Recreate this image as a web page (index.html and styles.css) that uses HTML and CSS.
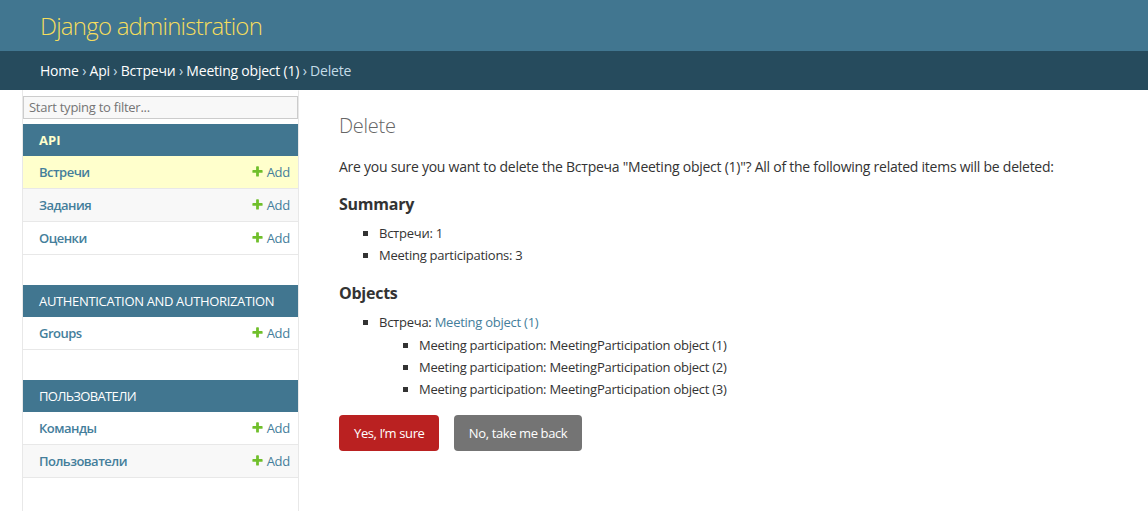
FILE: index.html
```html
<!DOCTYPE html>
<html lang="en">
<head>
<meta charset="utf-8">
<title>Delete | Django site admin</title>
<link rel="stylesheet" href="styles.css">
</head>
<body>
<div class="container">
  <header class="header">
    <h1 class="branding"><a href="#">Django administration</a></h1>
  </header>
  <nav class="breadcrumbs">
    <a href="#">Home</a> › <a href="#">Api</a> › <a href="#">Встречи</a> › <a href="#">Meeting object (1)</a> › Delete
  </nav>
  <div class="main">
    <button class="toggle-nav" aria-label="Toggle navigation"></button>
    <aside class="sidebar">
      <input class="nav-filter" type="search" placeholder="Start typing to filter...">
      <table class="module current-app">
        <caption><a class="section current" href="#">API</a></caption>
        <tr class="current-model"><th><a href="#">Встречи</a></th><td><a class="addlink" href="#"><svg class="plus" viewBox="0 0 1792 1792" width="13" height="13"><path fill="#70bf2b" d="M1600 796v192q0 40-28 68t-68 28h-416v416q0 40-28 68t-68 28h-192q-40 0-68-28t-28-68v-416h-416q-40 0-68-28t-28-68v-192q0-40 28-68t68-28h416v-416q0-40 28-68t68-28h192q40 0 68 28t28 68v416h416q40 0 68 28t28 68z"/></svg>Add</a></td></tr>
        <tr><th><a href="#">Задания</a></th><td><a class="addlink" href="#"><svg class="plus" viewBox="0 0 1792 1792" width="13" height="13"><path fill="#70bf2b" d="M1600 796v192q0 40-28 68t-68 28h-416v416q0 40-28 68t-68 28h-192q-40 0-68-28t-28-68v-416h-416q-40 0-68-28t-28-68v-192q0-40 28-68t68-28h416v-416q0-40 28-68t68-28h192q40 0 68 28t28 68v416h416q40 0 68 28t28 68z"/></svg>Add</a></td></tr>
        <tr><th><a href="#">Оценки</a></th><td><a class="addlink" href="#"><svg class="plus" viewBox="0 0 1792 1792" width="13" height="13"><path fill="#70bf2b" d="M1600 796v192q0 40-28 68t-68 28h-416v416q0 40-28 68t-68 28h-192q-40 0-68-28t-28-68v-416h-416q-40 0-68-28t-28-68v-192q0-40 28-68t68-28h416v-416q0-40 28-68t68-28h192q40 0 68 28t28 68v416h416q40 0 68 28t28 68z"/></svg>Add</a></td></tr>
      </table>
      <table class="module">
        <caption><a class="section latin" href="#">Authentication and Authorization</a></caption>
        <tr><th><a href="#">Groups</a></th><td><a class="addlink" href="#"><svg class="plus" viewBox="0 0 1792 1792" width="13" height="13"><path fill="#70bf2b" d="M1600 796v192q0 40-28 68t-68 28h-416v416q0 40-28 68t-68 28h-192q-40 0-68-28t-28-68v-416h-416q-40 0-68-28t-28-68v-192q0-40 28-68t68-28h416v-416q0-40 28-68t68-28h192q40 0 68 28t28 68v416h416q40 0 68 28t28 68z"/></svg>Add</a></td></tr>
      </table>
      <table class="module">
        <caption><a class="section cyr" href="#">Пользователи</a></caption>
        <tr><th><a href="#">Команды</a></th><td><a class="addlink" href="#"><svg class="plus" viewBox="0 0 1792 1792" width="13" height="13"><path fill="#70bf2b" d="M1600 796v192q0 40-28 68t-68 28h-416v416q0 40-28 68t-68 28h-192q-40 0-68-28t-28-68v-416h-416q-40 0-68-28t-28-68v-192q0-40 28-68t68-28h416v-416q0-40 28-68t68-28h192q40 0 68 28t28 68v416h416q40 0 68 28t28 68z"/></svg>Add</a></td></tr>
        <tr><th><a href="#">Пользователи</a></th><td><a class="addlink" href="#"><svg class="plus" viewBox="0 0 1792 1792" width="13" height="13"><path fill="#70bf2b" d="M1600 796v192q0 40-28 68t-68 28h-416v416q0 40-28 68t-68 28h-192q-40 0-68-28t-28-68v-416h-416q-40 0-68-28t-28-68v-192q0-40 28-68t68-28h416v-416q0-40 28-68t68-28h192q40 0 68 28t28 68v416h416q40 0 68 28t28 68z"/></svg>Add</a></td></tr>
      </table>
    </aside>
    <main class="content">
      <h1 class="title">Delete</h1>
      <p class="intro">Are you sure you want to delete the Встреча "Meeting object (1)"? All of the following related items will be deleted:</p>
      <h2 class="subhead">Summary</h2>
      <ul class="list">
        <li>Встречи: 1</li>
        <li>Meeting participations: 3</li>
      </ul>
      <h2 class="subhead">Objects</h2>
      <ul class="list">
        <li>Встреча: <a href="#">Meeting object (1)</a>
          <ul class="list nested">
            <li>Meeting participation: MeetingParticipation object (1)</li>
            <li>Meeting participation: MeetingParticipation object (2)</li>
            <li>Meeting participation: MeetingParticipation object (3)</li>
          </ul>
        </li>
      </ul>
      <form class="actions">
        <button type="button" class="btn btn-delete">Yes, I’m sure</button>
        <a href="#" class="btn btn-cancel">No, take me back</a>
      </form>
    </main>
  </div>
</div>
</body>
</html>
```
FILE: styles.css
```css
html, body { margin: 0; padding: 0; }
body {
  font-family: "Open Sans", "Noto Sans", "Liberation Sans", sans-serif;
  font-size: 14px;
  letter-spacing: -0.018em;
  color: #333;
  background: #fff;
}
a { color: #447e9b; text-decoration: none; }

.header {
  display: flex;
  align-items: center;
  padding: 10px 40px;
  background: #417690;
}
.branding { margin: 0; font-size: 24px; font-weight: 300; line-height: 31px; letter-spacing: -0.032em; }
.branding a { color: #f5dd5d; }

.breadcrumbs {
  background: #264b5d;
  padding: 10px 40px;
  color: #c4dce8;
  line-height: 19px;
  letter-spacing: -0.015em;
}
.breadcrumbs a { color: #fff; }

.main { display: flex; min-height: calc(100vh - 90px); }
.toggle-nav {
  flex: 0 0 23px;
  width: 23px;
  padding: 0;
  border: 0;
  border-right: 1px solid #e8e8e8;
  background: #fff;
}
.sidebar {
  flex: 0 0 275px;
  border-top: 1px solid transparent;
  border-right: 1px solid #e8e8e8;
}
.nav-filter {
  display: block;
  width: 100%;
  box-sizing: border-box;
  margin: 5px 0;
  padding: 2px 5px;
  border: 1px solid #ccc;
  background: #f8f8f8;
  font-family: inherit;
  font-size: 13px;
  line-height: 17px;
  letter-spacing: -0.02em;
  color: #333;
  outline: none;
}
.nav-filter::placeholder { color: #757575; }

.module { width: 100%; border-collapse: collapse; margin-bottom: 30px; }
.module caption {
  background: #417690;
  padding: 8px 8px 8px 16px;
  text-align: left;
  font-size: 13px;
  line-height: 16px;
  letter-spacing: 0;
  white-space: nowrap;
  text-transform: uppercase;
}
.module caption .section { color: #fff; }
.module caption .section.current { color: #ffc; font-weight: 700; }
.module caption .section.latin { letter-spacing: -0.026em; }
.module caption .section.cyr { letter-spacing: -0.05em; }
.module th, .module td {
  font-size: 13px;
  line-height: 16px;
  padding: 8px;
  border-bottom: 1px solid #e8e8e8;
  vertical-align: top;
}
.module th { text-align: left; padding-left: 16px; width: 100%; font-weight: 600; letter-spacing: -0.04em; }
.module td { white-space: nowrap; }
.module tr:nth-child(even) { background: #f8f8f8; }
.module tr.current-model { background: #ffc; }
.plus { vertical-align: top; margin: 1px 3px 0 0; }

.content { flex: 1 1 auto; padding: 20px 40px; }
.title { margin: 2px 0 18px; font-size: 20px; font-weight: 300; color: #666; line-height: 27px; }
.intro { margin: 2.8px 0 11.2px; line-height: 140%; }
.subhead { font-size: 16px; margin: 17px 0 7px; color: #333; line-height: 21px; }
.list { margin: 2.8px 0 11.2px; padding-left: 40px; }
.list li { list-style-type: square; padding: 1px 0; font-size: 13px; line-height: 20px; }
.list.nested { margin: 2.6px 0 0; }

.actions { padding-top: 3px; }
.btn {
  display: inline-block;
  vertical-align: middle;
  border: 0;
  border-radius: 4px;
  padding: 10px 15px;
  color: #fff;
  font-family: inherit;
  font-size: 13px;
  line-height: 16px;
  letter-spacing: -0.03em;
}
.btn-delete { background: #ba2121; }
.btn-cancel { background: #747474; margin-left: 11px; }
```
